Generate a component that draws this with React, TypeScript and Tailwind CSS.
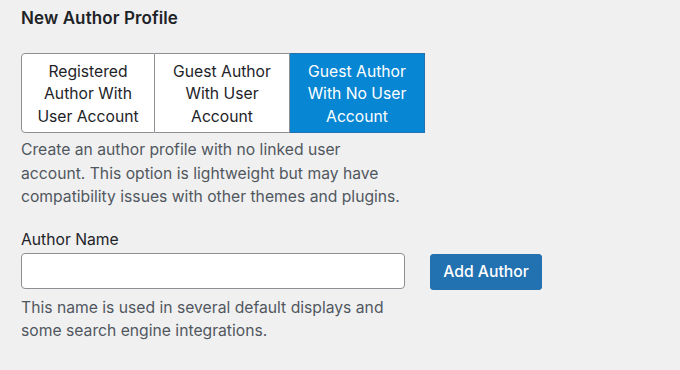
import React from "react";

export default function App() {
  return (
    <div className="w-[680px] h-[370px] bg-[#f0f0f1] text-[#1d2327] font-['Inter',sans-serif] pl-[21px] pt-[8px]">
      <h2 className="text-[17px] font-semibold leading-[20px] tracking-[0.1px]">New Author Profile</h2>
      <div className="mt-[25px] flex w-[404px] h-[80px] text-[15.7px] leading-[22.5px]">
        <div className="w-[134px] flex items-center justify-center text-center bg-white border border-[#8c8f94] rounded-l-[4px] px-[4px] pt-[3px]">
          Registered Author With User Account
        </div>
        <div className="w-[135px] flex items-center justify-center text-center bg-white border-y border-r border-[#8c8f94] px-[12px] pt-[3px]">
          Guest Author With User Account
        </div>
        <div className="w-[135px] flex items-center justify-center text-center bg-[#0786d3] text-white border border-[#2271b1] border-l-0 px-[12px] pt-[3px]">
          Guest Author With No User Account
        </div>
      </div>
      <p className="mt-[5px] w-[386px] text-[15.7px] leading-[23.5px] text-[#50575e]">
        Create an author profile with no linked user account. This option is lightweight but may have compatibility issues with other themes and plugins.
      </p>
      <div className="mt-[21px] text-[15.7px] leading-[20px]">Author Name</div>
      <div className="mt-[3px] flex items-start gap-[25px]">
        <input type="text" className="w-[384px] h-[36px] bg-white border border-[#8c8f94] rounded-[4px]" />
        <button className="mt-[1px] w-[112px] h-[36px] bg-[#2271b1] border border-[#2271b1] rounded-[3px] text-white text-[15.7px] font-medium">
          Add Author
        </button>
      </div>
      <p className="mt-[6px] w-[386px] text-[15.7px] leading-[23.5px] text-[#50575e]">
        This name is used in several default displays and some search engine integrations.
      </p>
    </div>
  );
}
